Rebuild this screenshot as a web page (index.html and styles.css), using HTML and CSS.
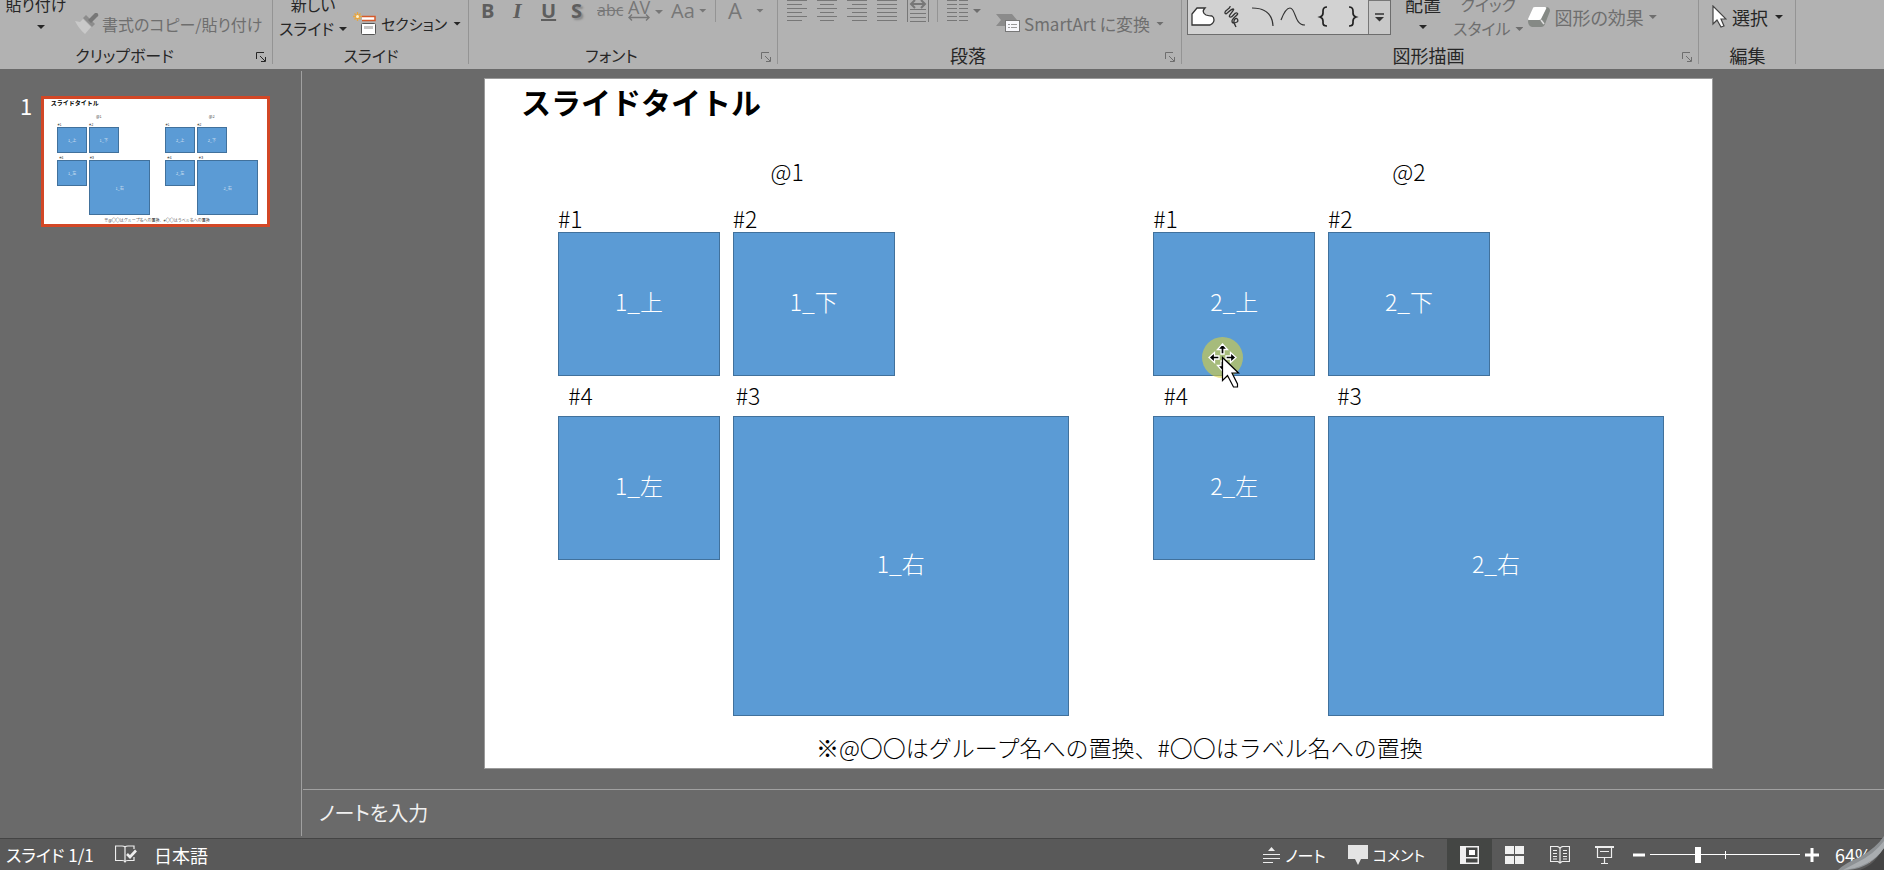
FILE: index.html
```html
<!DOCTYPE html>
<html lang="ja">
<head>
<meta charset="utf-8">
<title>スライドタイトル</title>
<link rel="stylesheet" href="styles.css">
</head>
<body>
<header class="ribbon">
  <section class="group group-clipboard">
    <div class="tools">
      <button class="tool large">貼り付け<span class="caret"></span></button>
      <button class="tool small off">
        <svg width="24" height="22" viewBox="0 0 24 22"><path d="M0 8l5 1 3-3 8 8-6 7Q4 16 0 8z" fill="#c9c9c9"/><path d="M8 5l3-3 9 9-3 3z" fill="#8c8c8c"/><path d="M13 7l7-7q2-1 3 1t-1 3l-6 6z" fill="#777"/></svg>
        書式のコピー/貼り付け
      </button>
    </div>
    <footer class="caption"><span>クリップボード</span><button class="launcher" aria-label="クリップボードの詳細"><svg width="10" height="10" viewBox="0 0 10 10"><path d="M.5 7V.5H8M4 4l5 5M9.500 5v4.500H5" fill="none" stroke="currentColor"/></svg></button></footer>
  </section>
  <section class="group group-slides">
    <div class="tools">
      <button class="tool large"><span>新しい</span><span>スライド<i class="caret"></i></span></button>
      <button class="tool small">
        <svg width="24" height="24" viewBox="0 0 24 24"><path d="M9 4.500h13v4H9" fill="#fff" stroke="#d5592a" stroke-width="1.500"/><path d="M4.500 0v9M0 4.500h9M1.500 1.500l6 6M7.500 1.500l-6 6" stroke="#e9a53c" stroke-width="1.300"/><circle cx="4.500" cy="4.500" r="1.500" fill="#fff3cf"/><rect x="8.500" y="11.500" width="14" height="11" rx="1" fill="#fff" stroke="#555"/><path d="M11 14h9v3h-9z" fill="#c4c4c4"/></svg>
        セクション<i class="caret"></i>
      </button>
    </div>
    <footer class="caption"><span>スライド</span></footer>
  </section>
  <section class="group group-font">
    <div class="tools top">
      <button class="glyph bold">B</button>
      <button class="glyph italic">I</button>
      <button class="glyph underline">U</button>
      <button class="glyph shadow">S</button>
      <button class="glyph strike">abc</button>
      <button class="glyph spacing"><span>AV</span><svg width="22" height="7" viewBox="0 0 22 7"><path d="M1 3.500h20M4 .5l-3 3 3 3M18 .5l3 3-3 3" fill="none" stroke="#777" stroke-width="1.400"/></svg></button>
      <i class="caret"></i>
      <button class="glyph case">Aa<i class="caret"></i></button>
      <span class="rule"></span>
      <button class="glyph color">A<i class="caret"></i></button>
    </div>
    <footer class="caption"><span>フォント</span><button class="launcher off" aria-label="フォントの詳細"><svg width="10" height="10" viewBox="0 0 10 10"><path d="M.5 7V.5H8M4 4l5 5M9.500 5v4.500H5" fill="none" stroke="currentColor"/></svg></button></footer>
  </section>
  <section class="group group-paragraph">
    <div class="tools top">
      <button class="line-icon" aria-label="左揃え"><svg width="20" height="22" viewBox="0 0 20 22"><path d="M0 .5h20M0 4.500h15M0 8.500h20M0 12.500h15M0 16.500h20M0 20.500h15" stroke="#777"/></svg></button>
      <button class="line-icon" aria-label="中央揃え"><svg width="20" height="22" viewBox="0 0 20 22"><path d="M0 .5h20M3 4.500h14M0 8.500h20M3 12.500h14M0 16.500h20M3 20.500h14" stroke="#777"/></svg></button>
      <button class="line-icon" aria-label="右揃え"><svg width="20" height="22" viewBox="0 0 20 22"><path d="M0 .5h20M5 4.500h15M0 8.500h20M5 12.500h15M0 16.500h20M5 20.500h15" stroke="#777"/></svg></button>
      <button class="line-icon" aria-label="両端揃え"><svg width="20" height="22" viewBox="0 0 20 22"><path d="M0 .5h20M0 4.500h20M0 8.500h20M0 12.500h20M0 16.500h20M0 20.500h20" stroke="#777"/></svg></button>
      <button class="line-icon" aria-label="均等割り付け"><svg width="22" height="22" viewBox="0 0 22 22"><path d="M.5 0v22M21.500 0v22M3 9.500h16M3 13.500h16M3 17.500h16M3 21.500h16" stroke="#777"/><path d="M4 4h14M8 0L4 4l4 4M14 0l4 4-4 4" fill="none" stroke="#777" stroke-width="2"/></svg></button>
      <span class="rule"></span>
      <button class="line-icon columns off" aria-label="段の追加"><svg width="21" height="22" viewBox="0 0 21 22"><path d="M0 .5h10M0 4.500h10M0 8.500h10M0 12.500h10M0 16.500h10M0 20.500h10M12 .5h9M12 4.500h9M12 8.500h9M12 12.500h9M12 16.500h9M12 20.500h9" stroke="#777"/></svg><i class="caret"></i></button>
      <button class="tool small off smartart">
        <svg width="24" height="20" viewBox="0 0 24 20"><path d="M0 0h16l5 6-5 6H0l5-6z" fill="#8b8b8b"/><rect x="9.500" y="6.500" width="14" height="11" fill="#f7f7fb" stroke="#777"/><path d="M12 10.500h2M15 10.500h6M12 13.500h2M15 13.500h6" stroke="#999"/></svg>
        SmartArt に変換<i class="caret"></i>
      </button>
    </div>
    <footer class="caption"><span>段落</span><button class="launcher off" aria-label="段落の詳細"><svg width="10" height="10" viewBox="0 0 10 10"><path d="M.5 7V.5H8M4 4l5 5M9.500 5v4.500H5" fill="none" stroke="currentColor"/></svg></button></footer>
  </section>
  <section class="group group-drawing">
    <div class="tools">
      <div class="gallery">
        <button aria-label="フリーフォーム"><svg width="24" height="22" viewBox="0 0 24 22"><path d="M1 19V8l5-6h8q-4 4 1 7 3 1 6 1 2 1 2 4t-4 5z" fill="#fff" stroke="#333" stroke-width="1.300"/></svg></button>
        <button aria-label="フリーハンド"><svg width="24" height="22" viewBox="0 0 24 22"><path d="M9 0c1 3-6 4-5 7s5-4 8-4-6 7-3 8 4-5 7-4-5 5-5 8 3 2 5 1 0-5-2-3-1 4 1 8" fill="none" stroke="#333" stroke-width="1.300"/></svg></button>
        <button aria-label="円弧"><svg width="24" height="22" viewBox="0 0 24 22"><path d="M1 2q20 0 21 18" fill="none" stroke="#333" stroke-width="1.200"/></svg></button>
        <button aria-label="曲線"><svg width="26" height="22" viewBox="0 0 26 22"><path d="M1 14C4 6 7 2 10 2c6 0 4 17 15 17" fill="none" stroke="#333" stroke-width="1.200"/></svg></button>
        <button aria-label="左中かっこ"><svg width="24" height="22" viewBox="0 0 24 22"><path d="M16 1q-4 0-4 4v2q0 3-3 4 3 1 3 4v2q0 3 4 3" fill="none" stroke="#222" stroke-width="1.700"/></svg></button>
        <button aria-label="右中かっこ"><svg width="24" height="22" viewBox="0 0 24 22"><path d="M8 1q4 0 4 4v2q0 3 3 4-3 1-3 4v2q0 3-4 3" fill="none" stroke="#222" stroke-width="1.700"/></svg></button>
        <button class="more" aria-label="その他の図形"><svg width="9" height="9" viewBox="0 0 9 9"><path d="M0 1h9" stroke="#333" stroke-width="1.500"/><path d="M0 4h9L4.500 8.500z" fill="#333"/></svg></button>
      </div>
      <button class="tool large arrange">配置<span class="caret"></span></button>
      <button class="tool large off"><span>クイック</span><span>スタイル<i class="caret"></i></span></button>
      <button class="tool small off raised effects">
        <svg width="24" height="22" viewBox="0 0 24 22"><path d="M1 15 6 3q1-2 3-2h10q4 0 4 4l-5 13q-1 3-4 3H5q-4-1-4-6z" fill="#858985"/><path d="M1 13 6 2q0-1 2-1h10q2 0 1 2l-5 10q0 1-2 1H2q-1 0-1-1z" fill="#fff"/><path d="M14 14l3 4" stroke="#ddd" stroke-width="1.500"/></svg>
        図形の効果<i class="caret"></i>
      </button>
    </div>
    <footer class="caption"><span>図形描画</span><button class="launcher off" aria-label="図形描画の詳細"><svg width="10" height="10" viewBox="0 0 10 10"><path d="M.5 7V.5H8M4 4l5 5M9.500 5v4.500H5" fill="none" stroke="currentColor"/></svg></button></footer>
  </section>
  <section class="group group-edit">
    <div class="tools">
      <button class="tool small raised">
        <svg width="15" height="24" viewBox="0 0 15 24"><path d="M1 1v18l4-4 4 7 3-1-3-7h5z" fill="#fff" stroke="#444" stroke-width="1.200"/></svg>
        選択<i class="caret"></i>
      </button>
    </div>
    <footer class="caption"><span>編集</span></footer>
  </section>
</header>

<main class="workspace">
  <aside class="thumbnails">
    <span class="number">1</span>
    <div class="thumb">
      <div class="slide mini" aria-hidden="true">
        <p class="title">スライドタイトル</p>
        <div class="set first">
          <p class="name">@1</p>
          <p class="tag t1">#1</p><p class="tag t2">#2</p><p class="tag t4">#4</p><p class="tag t3">#3</p>
          <div class="box b1">1_上</div><div class="box b2">1_下</div><div class="box b4">1_左</div><div class="box b3">1_右</div>
        </div>
        <div class="set second">
          <p class="name">@2</p>
          <p class="tag t1">#1</p><p class="tag t2">#2</p><p class="tag t4">#4</p><p class="tag t3">#3</p>
          <div class="box b1">2_上</div><div class="box b2">2_下</div><div class="box b4">2_左</div><div class="box b3">2_右</div>
        </div>
        <p class="remark">※@〇〇はグループ名への置換、#〇〇はラベル名への置換</p>
      </div>
    </div>
  </aside>
  <div class="editor">
    <div class="stage">
      <article class="slide full">
        <h1 class="title">スライドタイトル</h1>
        <div class="set first">
          <p class="name">@1</p>
          <p class="tag t1">#1</p><p class="tag t2">#2</p><p class="tag t4">#4</p><p class="tag t3">#3</p>
          <div class="box b1">1_上</div><div class="box b2">1_下</div><div class="box b4">1_左</div><div class="box b3">1_右</div>
        </div>
        <div class="set second">
          <p class="name">@2</p>
          <p class="tag t1">#1</p><p class="tag t2">#2</p><p class="tag t4">#4</p><p class="tag t3">#3</p>
          <div class="box b1">2_上</div><div class="box b2">2_下</div><div class="box b4">2_左</div><div class="box b3">2_右</div>
        </div>
        <p class="remark">※@〇〇はグループ名への置換、#〇〇はラベル名への置換</p>
        <svg class="pointer" width="42" height="52" viewBox="0 0 42 52">
          <circle cx="20.500" cy="20.500" r="20.500" fill="#d8d040" opacity=".6"/>
          <path d="M20.500 7l5 5.500h-3.500v4.500h-3v-4.500h-3.500zM7 20.500l5.500-5v3.500h4.500v3h-4.500v3.500zM34 20.500l-5.500-5v3.500h-4.500v3h4.500v3.500zM20.500 34l-5-5.500h3.500v-4.500h3v4.500h3.500z" fill="#000" stroke="#fff" stroke-width="1.300"/>
          <path d="M20.500 20.500v23l5-5 6 11.500h4v-3l-5.500-11h6.500z" fill="#fff" stroke="#000" stroke-width="1.200"/>
        </svg>
      </article>
    </div>
    <textarea class="notes" aria-label="ノート" placeholder="ノートを入力" rows="1"></textarea>
  </div>
</main>

<footer class="status">
  <span class="count">スライド 1/1</span>
  <button class="plain" aria-label="スペルチェック"><svg width="22" height="19" viewBox="0 0 22 19"><path d="M10 17.500V2Q9 1 7 1H.5v14.500H7q3 0 3 2 0-2 3-2h6V12M10 2q1-1 3-1h6v3" fill="none" stroke="#eee" stroke-width="1.200"/><path d="M12 9l3 3 6-6.500" fill="none" stroke="#eee" stroke-width="2.600"/></svg></button>
  <span class="language">日本語</span>
  <span class="fill"></span>
  <button class="plain notes-toggle"><svg width="17" height="18" viewBox="0 0 17 18"><path d="M5 5h7L8.500 1z" fill="#eee"/><path d="M0 8.500h17M0 12.500h17M0 16.500h10" stroke="#eee"/></svg>ノート</button>
  <button class="plain comments"><svg width="20" height="20" viewBox="0 0 20 20"><path d="M0 0h20v14h-7l-3 6-3-6H0z" fill="#e4e4e4"/></svg>コメント</button>
  <button class="view active" aria-label="標準"><svg width="19" height="18" viewBox="0 0 19 18"><path d="M0 0h19v18H0z" fill="#f0f0f0"/><path d="M6 1.500h11.500v9.500H6zM6 12.500h11.500v4H6z" fill="#444644"/><path d="M9 4h6v5H9z" fill="#fff"/></svg></button>
  <button class="view" aria-label="スライド一覧"><svg width="19" height="18" viewBox="0 0 19 18"><path d="M0 0h9v8H0zM10 0h9v8h-9zM0 10h9v8H0zM10 10h9v8h-9z" fill="#f0f0f0"/></svg></button>
  <button class="view" aria-label="閲覧表示"><svg width="20" height="18" viewBox="0 0 20 18"><path d="M10 2.500Q9 .5 7 .5H.5v15H8l2 1.500 2-1.500h7.500V.5H13q-2 0-3 2v15M3 4.500h4M3 7.500h4M3 10.500h4M3 13h4M13 4.500h4M13 7.500h4M13 10.500h4M13 13h4" fill="none" stroke="#eee" stroke-width="1.200"/></svg></button>
  <button class="view" aria-label="スライドショー"><svg width="19" height="18" viewBox="0 0 19 18"><path d="M0 1h19" stroke="#eee" stroke-width="2"/><path d="M2.500 2v9.500h14V2M5 5.500h9M9.500 12v5M6 17.500h7" fill="none" stroke="#eee" stroke-width="1.200"/></svg></button>
  <button class="plain minus" aria-label="縮小"><svg width="12" height="14" viewBox="0 0 12 14"><path d="M0 7h12" stroke="#fff" stroke-width="3"/></svg></button>
  <input class="zoom" type="range" min="0" max="100" value="31" aria-label="ズーム">
  <button class="plain" aria-label="拡大"><svg width="14" height="14" viewBox="0 0 14 14"><path d="M0 7h14M7 0v14" stroke="#fff" stroke-width="3"/></svg></button>
  <span class="percent">64%</span>
  <svg class="curl" width="46" height="34" viewBox="0 0 46 34"><path d="M46 9Q39 28 22 34h24z" fill="#444"/><path d="M46 0Q38 12 22 21 7 27 0 34h10Q33 32 46 12z" fill="#8d9194"/><path d="M46 5Q36 18 20 26L5 34Q33 31 46 12z" fill="#a9adb0"/></svg>
</footer>
</body>
</html>
```
FILE: styles.css
```css
* { box-sizing: border-box; }

body {
  margin: 0;
  min-height: 100vh;
  display: flex;
  flex-direction: column;
  overflow: hidden;
  background: #6a6a6a;
  color: #262626;
  font: 18px/24px "Noto Sans CJK JP", sans-serif;
  font-feature-settings: "palt";
}

p, h1 { margin: 0; font-weight: inherit; }

button {
  margin: 0;
  padding: 0;
  border: 0;
  background: none;
  color: inherit;
  font: inherit;
  font-feature-settings: inherit;
  white-space: nowrap;
}

svg { display: block; flex: none; }

/* Ribbon */
.ribbon { display: flex; height: 69px; background: #b2b2b2; }

.group { position: relative; display: flex; flex-direction: column; }
.group::after {
  content: "";
  position: absolute;
  inset: 0 0 5px auto;
  width: 1px;
  background: #949494;
}
.group-clipboard { width: 273px; }
.group-slides { width: 196px; }
.group-font { width: 309px; }
.group-paragraph { width: 404px; }
.group-drawing { width: 517px; }
.group-edit { width: 97px; }

.tools { display: flex; align-items: flex-end; height: 40px; }
.tools.top { align-items: flex-start; }

.caption {
  position: relative;
  display: flex;
  justify-content: center;
  height: 29px;
  padding-top: 3px;
  font-size: 16px;
}
.group-paragraph .caption, .group-drawing .caption, .group-edit .caption { font-size: 18px; }
.group-clipboard .caption { padding-right: 24px; }
.caption:has(.launcher) { padding-right: 24px; }
.launcher { position: absolute; right: 7px; top: 12px; }

.off { color: #6e6e6e; }

.caret {
  display: inline-block;
  width: 8px;
  height: 4px;
  flex: none;
  background: currentColor;
  clip-path: polygon(0 0, 100% 0, 50% 100%);
}

.tool.large {
  display: flex;
  flex-direction: column;
  align-items: center;
  height: 48px;
  font-size: 16px;
}
.tool.large > .caret { margin: 9px 0; }
.tool.large span .caret { margin: 0 0 4px 5px; }
.tool.small { display: flex; align-items: center; gap: 4px; height: 33px; }
.tool.small .caret { margin-left: 2px; }
.tool.raised { align-self: flex-start; height: 34px; }

.group-clipboard .tools { padding-left: 5px; gap: 8px; }
.group-clipboard .large { width: 62px; }
.group-clipboard .large .caret { margin-left: 10px; }
.group-clipboard .small { font-size: 16px; gap: 3px; }
.group-slides .tools { padding-left: 6px; gap: 6px; }
.group-slides .small { font-size: 15px; }
.group-edit .tools { padding-left: 13px; }
.group-edit .small { gap: 5px; }

.group-font .tools { padding-left: 12px; color: #777; }
.glyph {
  display: flex;
  align-items: center;
  gap: 4px;
  height: 21px;
  font: 22px/21px "Open Sans", sans-serif;
}
.bold, .italic, .underline, .shadow { width: 30px; color: #5e5e5e; font-weight: 700; }
.bold, .underline, .shadow { font-size: 20px; }
.italic { padding-left: 2px; font-family: "Liberation Serif", serif; font-style: italic; }
.underline { text-decoration: underline; }
.shadow { width: 26px; text-shadow: 2px 2px 2px #888; }
.strike { width: 31px; font-size: 16px; text-decoration: line-through; }
.spacing { width: 23px; flex-direction: column; align-items: flex-start; gap: 0; font: 18px/14px "Open Sans", sans-serif; }
.group-font .tools > .caret { margin: 10px 8px 0 4px; }
.rule { width: 1px; height: 22px; background: #949494; }
.case { width: 44px; font-size: 20px; }
.color { gap: 14px; padding-left: 12px; }

.group-paragraph .tools { padding-left: 9px; }
.line-icon { width: 30px; }
.group-paragraph .rule { margin: 0 9px 0 0; }
.columns { display: flex; align-items: center; gap: 5px; width: 49px; }
.smartart { align-self: flex-end; font-size: 17px; }

.gallery {
  display: flex;
  align-self: flex-start;
  margin-left: 5px;
  width: 204px;
  height: 35px;
  border: 1px solid #6d6d6d;
  border-top: 0;
  background: #d2d2d2;
}
.gallery button { flex: 1; display: flex; align-items: center; justify-content: center; }
.gallery .more { flex: 0 0 22px; border-left: 1px solid #777; border-top: 1px solid #777; background: #c8c8c8; }
.group-drawing .arrange { margin: 0 12px 0 14px; font-size: 18px; }
.effects { margin-left: 4px; }
.group-drawing .effects { gap: 3px; }

/* Workspace */
.workspace { display: flex; flex: 1; }

.thumbnails {
  display: flex;
  align-items: flex-start;
  width: 302px;
  margin: 2px 0;
  padding: 25px 31px 0 20px;
  border-right: 1px solid #a0a0a0;
  color: #fff;
}
.number { width: 21px; font-size: 22px; line-height: 18px; }
.thumb { flex: 1; border: 3px solid #d24726; }

.editor { display: flex; flex: 1; flex-direction: column; margin-left: 1px; }
.stage { display: flex; flex: 1; justify-content: center; align-items: flex-start; padding: 9px 0 0 10px; }

.notes {
  height: 49px;
  padding: 9px 16px;
  border: 0;
  border-top: 1px solid #a0a0a0;
  background: none;
  color: #fff;
  font: 20px/28px "Noto Sans CJK JP", sans-serif;
  font-feature-settings: "palt";
  resize: none;
}
.notes::placeholder { color: #f0f0f0; }

/* Slide canvas */
.slide {
  position: relative;
  aspect-ratio: 16 / 9;
  background: #fff;
  color: #000;
  font-weight: 300;
  font-feature-settings: normal;
  white-space: nowrap;
}
.full { width: 78.2%; box-shadow: inset 0 0 0 1px #9a9a9a; font-size: 23px; line-height: 30px; }
.mini { font-size: 4px; line-height: 6px; }

.title { position: absolute; left: 3%; top: 1%; font-weight: 700; }
.full .title { font-size: 30px; line-height: 32px; }
.mini .title { font-size: 6px; line-height: 6px; }

.set { position: absolute; top: 12.300%; width: 41.600%; height: 80%; }
.first { left: 6%; }
.second { left: 54.450%; }

.name, .tag { position: absolute; transform: translateY(-50%); }
.name { left: 41.600%; top: 1.400%; }
.second .name { left: 46.800%; }
.t1, .t2 { top: 10%; }
.t3, .t4 { top: 42%; }
.t1 { left: 0; }
.t2 { left: 34.200%; }
.t3 { left: 34.800%; }
.second .t3 { left: 36%; }
.t4 { left: 2%; }

.box {
  position: absolute;
  display: flex;
  align-items: center;
  justify-content: center;
  border: 1px solid #41719c;
  background: #5b9bd5;
  color: #fff;
}
.full .box { padding-bottom: 6px; }
.b1, .b2 { top: 12.500%; }
.b1, .b2, .b4 { width: 31.700%; height: 26%; }
.b3, .b4 { top: 45.800%; }
.b1, .b4 { left: 0; }
.b2, .b3 { left: 34.200%; }
.b3 { width: 65.800%; height: 54.200%; }

.remark { position: absolute; left: 27%; bottom: 1%; }

.pointer { position: absolute; left: 58.400%; top: 37.500%; }

/* Status bar */
.status {
  position: relative;
  display: flex;
  align-items: center;
  height: 32px;
  padding-left: 6px;
  border-top: 1px solid #444;
  background: #595959;
  color: #fff;
  font-size: 17px;
}
.count { width: 109px; }
.language { margin-left: 17px; font-size: 18px; }
.fill { flex: 1; }
.plain { display: flex; align-items: center; gap: 5px; }
.notes-toggle { margin-right: 22px; font-size: 16px; }
.comments { margin-right: 22px; font-size: 15px; }
.view { display: flex; align-items: center; justify-content: center; align-self: stretch; width: 45px; }
.view.active { background: #444644; }
.minus { margin-left: 6px; }

.zoom {
  appearance: none;
  width: 150px;
  height: 16px;
  margin: 0 5px;
  background:
    linear-gradient(#fff, #fff) 50% 50% / 1px 8px no-repeat,
    linear-gradient(#fff, #fff) 50% 50% / 100% 1px no-repeat;
}
.zoom::-webkit-slider-thumb { appearance: none; width: 6px; height: 16px; background: #fff; }

.percent { width: 65px; padding-left: 16px; font-size: 18px; }
.curl { position: absolute; right: 0; bottom: 0; }
```
